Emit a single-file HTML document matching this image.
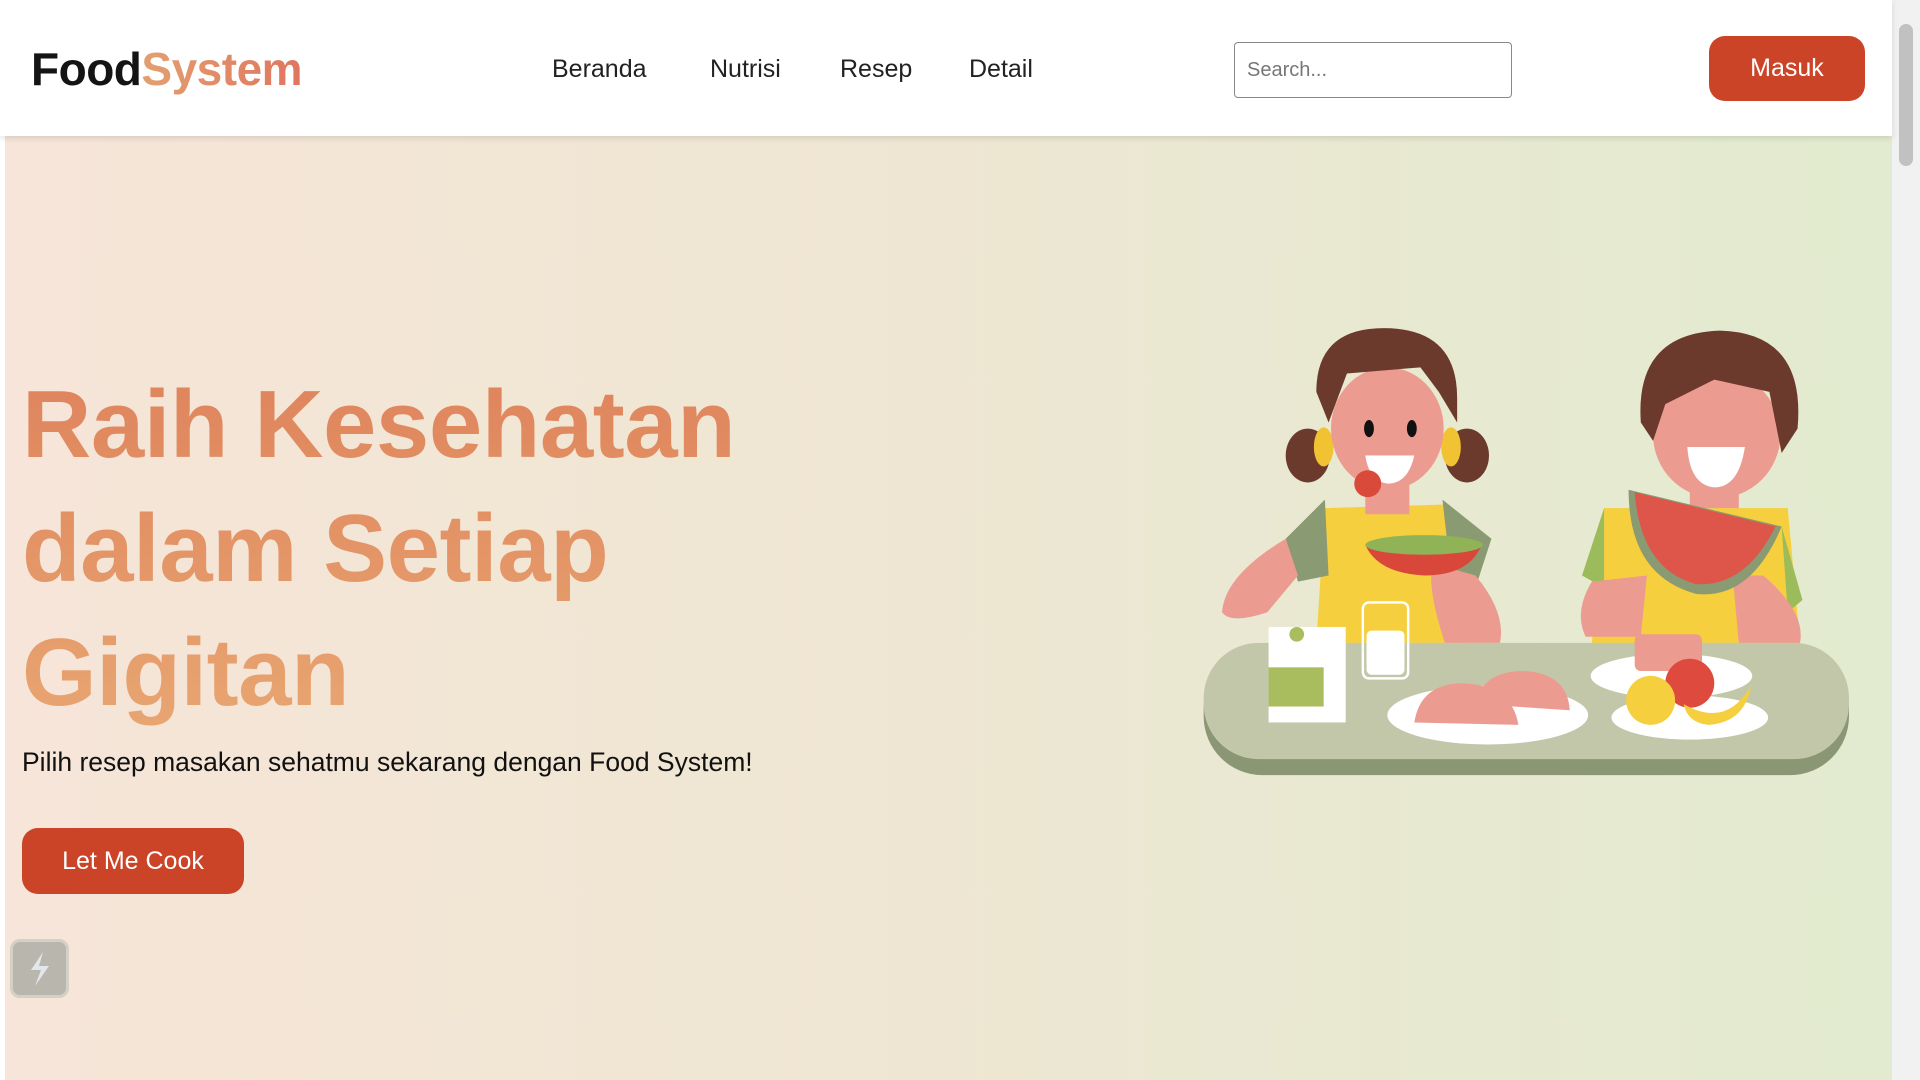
<!DOCTYPE html>
<html><head><meta charset="utf-8"><style>
*{margin:0;padding:0;box-sizing:border-box}
body{width:1920px;height:1080px;overflow:hidden;font-family:"Liberation Sans",sans-serif;position:relative;background:#fff}
.hero{position:absolute;left:5px;top:136px;width:1887px;height:944px;background:linear-gradient(90deg,#f6e5d8 0%,#efe6d3 45%,#e2ebcf 100%)}
nav{position:absolute;left:0;top:0;width:1892px;height:136px;background:#fff;box-shadow:0 2px 6px rgba(0,0,0,.12);z-index:2}
.logo{position:absolute;left:31px;top:42px;font-weight:bold;font-size:46px;letter-spacing:-0.5px;color:#141414}
.logo span{background:linear-gradient(90deg,#e3a070,#e07560);-webkit-background-clip:text;color:transparent}
.nl{position:absolute;top:55px;font-size:25px;color:#222}
.search{position:absolute;left:1234px;top:42px;width:278px;height:56px;border:1px solid #888;border-radius:4px;font-size:20px;color:#777;padding:16px 12px}
.btn{position:absolute;background:#cb4427;color:#fff;border-radius:16px;font-size:25px;display:flex;align-items:center;justify-content:center}
h1{position:absolute;left:22px;top:363px;font-size:96px;line-height:124px;font-weight:bold;letter-spacing:-0.5px;background:linear-gradient(180deg,#df835c 0%,#e8a671 100%);-webkit-background-clip:text;color:transparent}
.sub{position:absolute;left:22px;top:747px;font-size:26.5px;color:#111}
.sb{position:absolute;right:0;top:0;width:28px;height:1080px;background:#f1f1f1}
.sb div{position:absolute;left:7px;top:24px;width:14px;height:142px;background:#c1c1c1;border-radius:7px}
.fi{position:absolute;left:10px;top:939px;width:59px;height:59px;border-radius:10px;background:#b9b6ae;border:3px solid #d4d0c6}
</style></head><body>
<div class="hero"></div>
<nav>
<div class="logo">Food<span>System</span></div>
<div class="nl" style="left:552px">Beranda</div>
<div class="nl" style="left:710px">Nutrisi</div>
<div class="nl" style="left:840px">Resep</div>
<div class="nl" style="left:969px">Detail</div>
<div class="search">Search...</div>
<div class="btn" style="left:1709px;top:36px;width:156px;height:65px">Masuk</div>
</nav>
<h1>Raih Kesehatan<br>dalam Setiap<br>Gigitan</h1>
<div class="sub">Pilih resep masakan sehatmu sekarang dengan Food System!</div>
<div class="btn" style="left:22px;top:828px;width:222px;height:66px">Let Me Cook</div>
<div class="fi"><svg width="53" height="53" viewBox="0 0 53 53"><path d="M30 10 L18 28 L28 28 L22 44 L36 24 L26 24 Z" fill="#e3e6ea"/></svg></div>
<svg style="position:absolute;left:0;top:0" width="1920" height="1080" viewBox="0 0 1568 882">
<ellipse cx="1068" cy="372" rx="18" ry="22" fill="#6b3a2c"/><ellipse cx="1198" cy="372" rx="18" ry="22" fill="#6b3a2c"/>
<ellipse cx="1081" cy="365" rx="8" ry="16" fill="#f1c232"/><ellipse cx="1185" cy="365" rx="8" ry="16" fill="#f1c232"/>
<path d="M1075 525 L1082 415 L1180 412 L1200 525 Z" fill="#f6cf3f"/>
<path d="M1082 408 L1050 440 L1060 475 L1085 470 Z" fill="#8a9a72"/><path d="M1178 408 L1218 440 L1205 480 L1185 470 Z" fill="#8a9a72"/>
<path d="M1050 440 Q1000 470 998 500 Q1005 510 1035 500 L1060 470 Z" fill="#ec9b90"/>
<path d="M1205 470 Q1230 500 1225 525 L1180 525 Q1165 480 1170 460 Z" fill="#ec9b90"/>
<rect x="1115" y="390" width="36" height="30" fill="#ec9b90"/>
<ellipse cx="1133" cy="350" rx="46" ry="50" fill="#ec9b90"/>
<path d="M1075 320 Q1075 268 1130 268 Q1190 268 1190 325 L1190 345 L1175 320 L1160 300 L1100 305 L1085 345 Z" fill="#6b3a2c"/>
<ellipse cx="1118" cy="350" rx="4" ry="7" fill="#111"/><ellipse cx="1153" cy="350" rx="4" ry="7" fill="#111"/>
<path d="M1115 372 L1155 372 Q1150 395 1133 395 Q1118 393 1115 372 Z" fill="#fff"/>
<circle cx="1117" cy="395" r="11" fill="#d94a3a"/>
<path d="M1115 445 L1210 445 Q1200 470 1163 470 Q1125 468 1115 445 Z" fill="#d9473a"/>
<ellipse cx="1163" cy="445" rx="48" ry="8" fill="#8fb356"/>
<path d="M1300 525 L1310 415 L1460 415 L1470 525 Z" fill="#f6cf3f"/>
<path d="M1310 415 L1292 470 L1310 480 Z" fill="#9cbb5a"/><path d="M1455 430 L1472 490 L1460 500 Z" fill="#9cbb5a"/>
<path d="M1300 475 Q1285 500 1295 520 L1340 520 L1345 470 Z" fill="#ec9b90"/>
<path d="M1440 470 Q1475 500 1470 525 L1420 525 L1415 470 Z" fill="#ec9b90"/>
<rect x="1380" y="385" width="40" height="30" fill="#ec9b90"/>
<ellipse cx="1402" cy="355" rx="52" ry="52" fill="#ec9b90"/>
<path d="M1340 345 Q1335 272 1405 270 Q1475 272 1468 350 L1455 370 L1445 320 L1400 310 L1360 330 L1350 360 Z" fill="#6b3a2c"/>
<path d="M1378 365 L1425 365 Q1420 398 1400 398 Q1380 396 1378 365 Z" fill="#fff"/>
<path d="M1330 400 L1455 430 Q1430 490 1385 485 Q1330 470 1330 400 Z" fill="#8a9a72"/>
<path d="M1335 402 L1450 430 Q1425 480 1385 477 Q1340 465 1335 402 Z" fill="#de5549"/>
<rect x="983" y="530" width="527" height="103" rx="48" fill="#8a9674"/>
<rect x="983" y="525" width="527" height="95" rx="45" fill="#c2c7aa"/>
<rect x="1036" y="512" width="63" height="78" fill="#fff"/><rect x="1036" y="545" width="45" height="32" fill="#a9bd5e"/>
<circle cx="1059" cy="518" r="6" fill="#a9bd5e"/>
<rect x="1113" y="492" width="37" height="62" rx="5" fill="none" stroke="#fff" stroke-width="2"/>
<rect x="1116" y="515" width="31" height="36" rx="4" fill="#fff"/>
<ellipse cx="1215" cy="584" rx="82" ry="24" fill="#fff"/>
<path d="M1155 590 Q1160 558 1195 558 Q1235 560 1240 592 Z" fill="#ec9b90"/>
<path d="M1205 575 Q1210 548 1245 548 Q1280 550 1282 580 Z" fill="#ec9b90"/>
<ellipse cx="1365" cy="552" rx="66" ry="18" fill="#fff"/>
<ellipse cx="1380" cy="586" rx="64" ry="18" fill="#fff"/>
<rect x="1335" y="518" width="55" height="30" rx="5" fill="#ec9b90"/>
<circle cx="1380" cy="558" r="20" fill="#de4a3e"/>
<circle cx="1348" cy="572" r="20" fill="#f6cf3f"/>
<path d="M1375 575 Q1410 595 1430 560 Q1425 590 1395 592 Q1378 590 1375 575 Z" fill="#f6cf3f"/>
</svg>
<div class="sb"><div></div></div>
</body></html>
